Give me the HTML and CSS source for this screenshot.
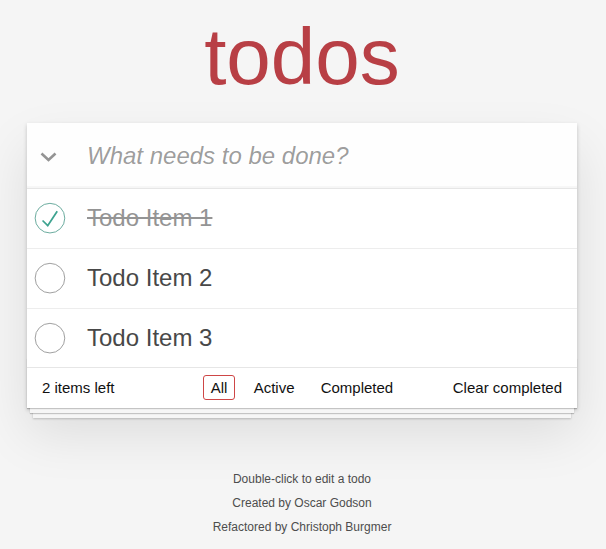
FILE: index.html
```html
<!DOCTYPE html>
<html lang="en">
<head>
<meta charset="utf-8">
<title>todos</title>
<link rel="stylesheet" href="styles.css">
</head>
<body>
<div class="page">
  <h1 class="title">todos</h1>
  <section class="todoapp">
    <header class="header">
      <button class="toggle-all" aria-label="Mark all as complete">
        <svg width="17" height="10" viewBox="0 0 17 10"><polyline points="1.5,1.5 8.5,8 15.5,1.5" fill="none" stroke="#949494" stroke-width="2.6" stroke-linejoin="miter"/></svg>
      </button>
      <input class="new-todo" placeholder="What needs to be done?">
    </header>
    <ul class="todo-list">
      <li class="todo completed">
        <svg class="toggle" width="40" height="40" viewBox="-10 -18 100 135"><circle cx="50" cy="50" r="50" fill="none" stroke="#59A193" stroke-width="3"/><path fill="#3EA390" d="M72 25L42 71 27 56l-4 4 20 20 34-52z"/></svg>
        <span class="todo-label">Todo Item 1</span>
      </li>
      <li class="todo">
        <svg class="toggle" width="40" height="40" viewBox="-10 -18 100 135"><circle cx="50" cy="50" r="50" fill="none" stroke="#949494" stroke-width="3"/></svg>
        <span class="todo-label">Todo Item 2</span>
      </li>
      <li class="todo">
        <svg class="toggle" width="40" height="40" viewBox="-10 -18 100 135"><circle cx="50" cy="50" r="50" fill="none" stroke="#949494" stroke-width="3"/></svg>
        <span class="todo-label">Todo Item 3</span>
      </li>
    </ul>
    <footer class="footer">
      <span class="todo-count"><strong>2</strong> items left</span>
      <ul class="filters">
        <li><a class="selected" href="#/">All</a></li>
        <li><a href="#/active">Active</a></li>
        <li><a href="#/completed">Completed</a></li>
      </ul>
      <button class="clear-completed">Clear completed</button>
    </footer>
  </section>
  <footer class="info">
    <p>Double-click to edit a todo</p>
    <p>Created by Oscar Godson</p>
    <p>Refactored by Christoph Burgmer</p>
  </footer>
</div>
</body>
</html>
```
FILE: styles.css
```css
* { box-sizing: border-box; }
html, body { margin: 0; padding: 0; }
body {
  background: #f5f5f5;
  color: #111111;
  font-family: "Liberation Sans", Arial, Helvetica, sans-serif;
  font-size: 14px;
  line-height: 1.4em;
  padding-right: 2px;
}
.page {
  width: 550px;
  margin: 0 auto;
  padding-top: 17px;
}
.title {
  margin: 0;
  height: 80px;
  font-size: 80px;
  line-height: 80px;
  font-weight: 400;
  text-align: center;
  color: #b83f45;
}
.todoapp {
  position: relative;
  margin-top: 26px;
  background: #fff;
  box-shadow: 0 2px 4px 0 rgba(0,0,0,0.2), 0 25px 50px 0 rgba(0,0,0,0.1);
}
.header {
  display: flex;
  align-items: center;
  height: 65px;
  background: rgba(0,0,0,0.003);
  box-shadow: inset 0 -2px 1px rgba(0,0,0,0.03);
}
.toggle-all {
  width: 60px;
  height: 65px;
  padding: 3px 0 0 13px;
  border: none;
  background: none;
  display: flex;
  align-items: center;
  flex: none;
}
.toggle-all svg { display: block; }
.new-todo {
  flex: 1;
  height: 65px;
  padding: 16px 16px 16px 0;
  border: none;
  background: transparent;
  font-family: inherit;
  font-size: 24px;
  line-height: 1.4em;
  color: #484848;
  outline: none;
}
.new-todo::placeholder {
  font-style: italic;
  font-weight: 400;
  color: rgba(0,0,0,0.4);
}
.todo-list {
  margin: 0;
  padding: 0;
  list-style: none;
  border-top: 1px solid #e6e6e6;
}
.todo {
  display: flex;
  align-items: center;
  font-size: 24px;
  border-bottom: 1px solid #ededed;
}
.todo:last-child { border-bottom: none; }
.toggle { display: block; flex: none; margin-left: 0; }
.todo-label {
  display: block;
  padding: 15px 15px 15px 20px;
  line-height: 1.2;
  color: #484848;
}
.completed .todo-label {
  color: #949494;
  text-decoration: line-through;
}
.footer {
  position: relative;
  display: grid;
  grid-template-columns: 1fr auto 1fr;
  align-items: center;
  padding: 10px 15px;
  height: 41px;
  font-size: 15px;
  line-height: 20px;
  border-top: 1px solid #e6e6e6;
}
.footer::before {
  content: '';
  position: absolute;
  right: 0;
  bottom: 0;
  left: 0;
  height: 50px;
  overflow: hidden;
  box-shadow: 0 1px 1px rgba(0,0,0,0.2),
              0 8px 0 -3px #f6f6f6,
              0 9px 1px -3px rgba(0,0,0,0.2),
              0 16px 0 -6px #f6f6f6,
              0 17px 2px -6px rgba(0,0,0,0.2);
}
.todo-count { justify-self: start; position: relative; }
.todo-count strong { font-weight: 400; }
.filters {
  margin: 0;
  padding: 0;
  list-style: none;
  position: relative;
}
.filters li { display: inline; }
.filters a {
  color: inherit;
  margin: 3px;
  padding: 3px 7px;
  text-decoration: none;
  border: 1px solid transparent;
  border-radius: 3px;
}
.filters a.selected { border-color: #ce4646; }
.clear-completed {
  justify-self: end;
  position: relative;
  margin: 0;
  padding: 0;
  border: none;
  background: none;
  font-family: inherit;
  font-size: 15px;
  line-height: 20px;
  color: inherit;
}
.info {
  margin-top: 65px;
  color: #4d4d4d;
  font-size: 12px;
  text-align: center;
}
.info p {
  margin: 12px 0;
  line-height: 1;
}
```
